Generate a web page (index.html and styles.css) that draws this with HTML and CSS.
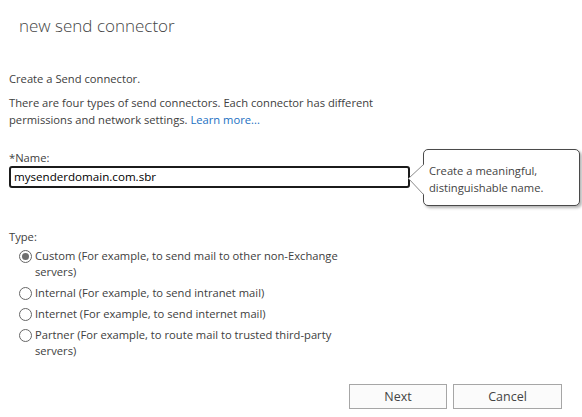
FILE: index.html
```html
<!DOCTYPE html>
<html>
<head>
<meta charset="utf-8">
<link rel="stylesheet" href="styles.css">
</head>
<body>
<div class="dialog">
  <h1 class="title">new send connector</h1>
  <div class="content">
    <p class="intro">Create a Send connector.</p>
    <p class="desc">There are four types of send connectors. Each connector has different permissions and network settings. <a class="link" href="#">Learn more...</a></p>
    <div class="field">
      <label class="label">*Name:</label>
      <div class="input-row">
        <div class="input">mysenderdomain.com.sbr</div>
        <div class="tip">
          <svg class="tip-arrow" width="16" height="32" viewBox="0 0 16 32"><polygon points="16,0.5 0.5,14.5 16,30.5" fill="#fff"/><polyline points="15.5,0.5 0.5,14.5 15.5,30.5" fill="none" stroke="#8a8a8a" stroke-width="1"/></svg>
          <span class="tip-text">Create a meaningful, distinguishable name.</span>
        </div>
      </div>
    </div>
    <div class="type">
      <div class="label">Type:</div>
      <div class="radio checked"><span class="dot"></span><span class="rtext">Custom (For example, to send mail to other non-Exchange servers)</span></div>
      <div class="radio"><span class="dot"></span><span class="rtext">Internal (For example, to send intranet mail)</span></div>
      <div class="radio"><span class="dot"></span><span class="rtext">Internet (For example, to send internet mail)</span></div>
      <div class="radio"><span class="dot"></span><span class="rtext">Partner (For example, to route mail to trusted third-party servers)</span></div>
    </div>
  </div>
  <div class="buttons">
    <button class="btn next">Next</button>
    <button class="btn cancel">Cancel</button>
  </div>
</div>
</body>
</html>
```
FILE: styles.css
```css
html, body { margin: 0; padding: 0; background: #fff; }
body {
  font-family: "Open Sans", "Noto Sans", sans-serif;
  font-size: 11.2px;
  color: #404040;
  width: 582px;
  height: 417px;
  overflow: hidden;
}
.dialog { display: flex; flex-direction: column; height: 417px; }
.title {
  margin: 0;
  padding: 14px 0 0 19px;
  font-size: 17px;
  font-weight: 300;
  color: #444;
  line-height: 24px;
  height: 38px;
}
.content { padding: 18px 0 0 9px; }
p { margin: 0; line-height: 17px; }
.intro { margin-bottom: 7px; }
.desc { width: 390px; }
.link { color: #1a6fc2; text-decoration: none; }
.field { margin-top: 21px; }
.label { display: block; line-height: 17px; }
.input-row { display: flex; align-items: flex-start; position: relative; height: 62px; }
.input {
  width: 394px;
  height: 18px;
  border: 2px solid #1b1b1b;
  border-radius: 3px;
  color: #000;
  font-size: 11.6px;
  line-height: 18px;
  padding-left: 3px;
  box-sizing: content-box;
}
.tip {
  position: absolute;
  left: 414px;
  top: -17px;
  width: 157px;
  height: 57px;
  box-sizing: border-box;
  border: 1px solid #4a4a4a;
  border-radius: 5px;
  background: #fff;
  box-shadow: 2px 2px 3px rgba(0,0,0,0.3);
  padding: 12px 0 0 5px;
  line-height: 17px;
  color: #444;
}
.tip-text { display: block; width: 140px; }
.tip-arrow {
  position: absolute;
  left: -16px;
  top: 14px;
}
.type { margin-top: 0; }
.type .label { margin-bottom: 3px; }
.radio { display: flex; align-items: flex-start; padding-left: 10px; margin-bottom: 5px; }
.dot {
  flex: none;
  width: 11px;
  height: 11px;
  border: 1px solid #666;
  border-radius: 50%;
  margin: 2px 3px 0 0;
  position: relative;
}
.checked .dot::after {
  content: "";
  position: absolute;
  left: 2px; top: 2px;
  width: 7px; height: 7px;
  border-radius: 50%;
  background: #6f6f6f;
}
.rtext { width: 312px; line-height: 16px; }
.buttons {
  margin-top: auto;
  display: flex;
  justify-content: flex-end;
  gap: 6px;
  padding: 0 20px 8px 0;
}
.btn {
  font-family: inherit;
  font-size: 12.5px;
  color: #444;
  background: #fbfbfb;
  border: 1px solid #a6a6a6;
  height: 25px;
  padding: 0;
}
.next { width: 98px; }
.cancel { width: 109px; }
```
